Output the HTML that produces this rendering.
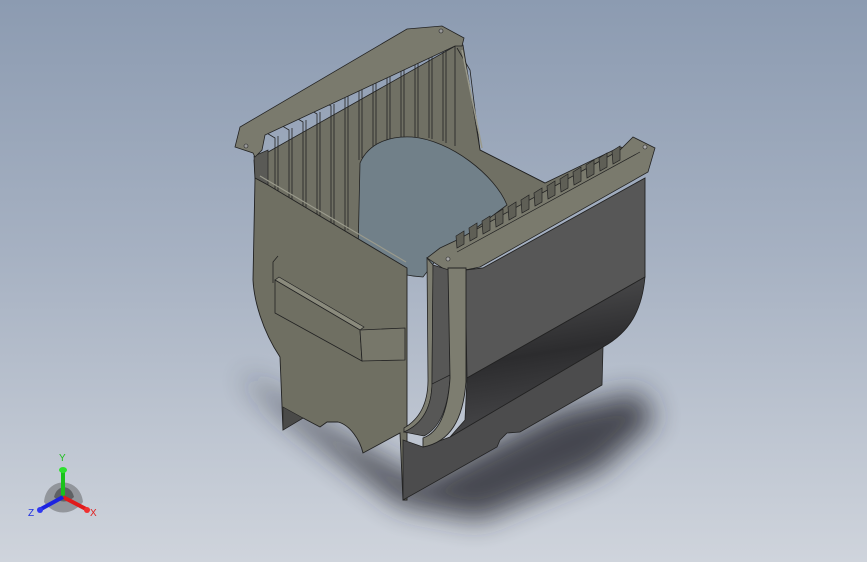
<!DOCTYPE html>
<html><head><style>
html,body{margin:0;padding:0;width:867px;height:562px;overflow:hidden}
body{background:linear-gradient(180deg,#8c9bb1 0%,#a6b1c2 45%,#cfd4dc 100%)}
svg{position:absolute;left:0;top:0}
</style></head><body>
<svg width="867" height="562" viewBox="0 0 867 562">
<defs>
<filter id="bl" x="-30%" y="-30%" width="160%" height="160%"><feGaussianBlur stdDeviation="14"/></filter>
<linearGradient id="cyl" x1="0" y1="0" x2="0.2" y2="1">
<stop offset="0" stop-color="#555556"/><stop offset="0.55" stop-color="#2c2c2e"/><stop offset="1" stop-color="#48484a"/></linearGradient>
</defs>
<!-- shadow -->
<path d="M240 375 L290 420 L400 505 L480 520 L600 470 L655 420 L640 392 L560 410 L420 480 L330 430 L260 385 Z" fill="#25272e" opacity="0.8" filter="url(#bl)"/>
<!-- interior back fill -->
<polygon points="254,160 457,45 463,45 480,150 545,183 620,147 640,150 430,262 407,270 255,180" fill="#707064" stroke="#222" stroke-width="0.8"/>
<!-- dark corner under left flange end -->
<polygon points="254,156 268,150 268,185 255,178" fill="#5a5a56" stroke="#222" stroke-width="0.7"/>
<!-- right side interior edge -->
<polyline points="457,48 470,70 480,150 545,183" fill="none" stroke="#222" stroke-width="0.8"/>
<line x1="462" y1="50" x2="482" y2="148" stroke="#9a9a8c" stroke-width="1.5"/>
<!-- back fins -->
<g stroke="#222" stroke-width="0.8" fill="none">
<path d="M265 132 L275 138 L275 205 M278 136 L278 207"/>
<path d="M279 124 L289 130 L289 213 M292 128 L292 215"/>
<path d="M293 116 L303 122 L303 221 M306 120 L306 223"/>
<path d="M307 108 L317 114 L317 229 M320 112 L320 231"/>
<path d="M321 100 L331 106 L331 237 M334 104 L334 239"/>
<path d="M335 92 L345 98 L345 245 M348 96 L348 230"/>
<path d="M349 84 L359 90 L359 160 M362 88 L362 158"/>
<path d="M363 76 L373 82 L373 150 M376 80 L376 148"/>
<path d="M377 68 L387 74 L387 143 M390 72 L390 141"/>
<path d="M391 60 L401 66 L401 139 M404 64 L404 138"/>
<path d="M405 52 L415 58 L415 137 M418 56 L418 137"/>
<path d="M419 44 L429 50 L429 138 M432 48 L432 139"/>
<path d="M433 36 L443 42 L443 141 M446 40 L446 143"/>
<path d="M447 30 L455 34 L455 146"/>
</g>
<!-- blue-grey ellipse -->
<path d="M360 163 C370 140 395 136 412 137 C450 140 495 175 507 205 L440 255 L423 277 C395 275 365 265 358 253 Z" fill="#718089" stroke="#222" stroke-width="0.8"/>
<!-- top back flange -->
<polygon points="235,147 240,127 407,29 442,26 464,38 462,46 455,46 265,135 262,150 255,157 253,153" fill="#7a7a6d" stroke="#222" stroke-width="0.8"/>
<circle cx="246" cy="146" r="2" fill="#999" stroke="#222" stroke-width="0.6"/>
<circle cx="441" cy="31" r="2" fill="#999" stroke="#222" stroke-width="0.6"/>
<!-- right top flange -->
<polygon points="427,258 440,248 457,240 620,150 633,137 655,148 648,172 480,267 450,273" fill="#7a7a6d" stroke="#222" stroke-width="0.8"/>
<g stroke="#222" stroke-width="0.7" fill="#5f5f56">
<polygon points="456,236 464,231 464,244 457,248"/>
<polygon points="469,228 477,223 477,237 470,241"/>
<polygon points="482,221 490,216 490,230 483,234"/>
<polygon points="495,214 503,209 503,223 496,227"/>
<polygon points="508,207 516,202 516,216 509,220"/>
<polygon points="521,200 529,195 529,209 522,213"/>
<polygon points="534,193 542,188 542,202 535,206"/>
<polygon points="547,186 555,181 555,195 548,199"/>
<polygon points="560,179 568,174 568,188 561,192"/>
<polygon points="573,172 581,167 581,181 574,185"/>
<polygon points="586,165 594,160 594,174 587,178"/>
<polygon points="599,158 607,153 607,167 600,171"/>
<polygon points="612,151 620,146 620,160 613,164"/>
</g>
<line x1="457" y1="252" x2="640" y2="152" stroke="#222" stroke-width="0.7"/>
<circle cx="448" cy="259" r="2" fill="#aaa" stroke="#222" stroke-width="0.6"/>
<circle cx="645" cy="147" r="2" fill="#aaa" stroke="#222" stroke-width="0.6"/>
<!-- left wall -->
<path d="M255 178 L268 185 L407 268 L407 500 L403 500 L400 433 L363 453 C360 440 350 425 338 422 L327 422 L320 427 L303 418 L283 430 L280 357 C262 330 254 300 253 280 Z" fill="#6f6f62" stroke="#222" stroke-width="0.9"/>
<polygon points="283,407 303,418 283,430" fill="#4a4a48" stroke="#222" stroke-width="0.6"/>
<line x1="260" y1="176" x2="406" y2="262" stroke="#9a9a8c" stroke-width="1.2"/>
<!-- rib -->
<polyline points="273,283 273,262 278,256" fill="none" stroke="#222" stroke-width="0.8"/>
<polygon points="275,280 279,277 364,327 360,330" fill="#8a8a7c" stroke="#222" stroke-width="0.7"/>
<polygon points="275,280 360,330 362,361 275,313" fill="#6f6f62" stroke="#222" stroke-width="0.8"/>
<polygon points="360,330 405,328 405,360 362,361" fill="#77776a" stroke="#222" stroke-width="0.8"/>
<!-- right wall upper face -->
<path d="M465 270 L483 268 L645 178 L645 277 L467 378 Z" fill="#575757" stroke="#222" stroke-width="0.9"/>
<!-- lower box -->
<polygon points="403,440 423,447 450,437 603,347 602,385 520,432 507,433 500,440 497,447 403,500" fill="#4c4c4d" stroke="#222" stroke-width="0.8"/>
<!-- cylinder -->
<path d="M467 378 L645 277 C642 310 630 332 603 347 L450 437 L465 420 Z" fill="url(#cyl)" stroke="#222" stroke-width="0.8"/>
<!-- front strips -->
<path d="M427 258 L433 265 L432 382 C432 410 420 425 404 432 L404 428 C418 420 428 405 428 380 Z" fill="#7d7d70" stroke="#222" stroke-width="0.8"/>
<path d="M433 265 L449 270 L450 378 C448 408 440 428 424 436 L404 432 C420 425 432 410 432 382 Z" fill="#575756" stroke="#222" stroke-width="0.7"/>
<path d="M448 268 L466 268 L466 382 C463 420 450 442 423 447 L423 438 C440 432 448 410 450 378 Z" fill="#7d7d70" stroke="#222" stroke-width="0.9"/>
<line x1="432" y1="384" x2="450" y2="375" stroke="#222" stroke-width="0.7"/>
<!-- triad -->
<g>
<path d="M44 502 C46 476 80 476 83 502 C72 516 54 516 44 502 Z" fill="#444" opacity="0.4"/>
<path d="M54 497 C57 484 71 484 74 497 C68 503 60 503 54 497 Z" fill="#222" opacity="0.45"/>
<line x1="63" y1="497" x2="63" y2="472" stroke="#19c21a" stroke-width="4"/>
<ellipse cx="63" cy="470" rx="4" ry="3" fill="#2ee02f"/>
<line x1="63" y1="497" x2="86" y2="509" stroke="#e01b1b" stroke-width="4"/>
<circle cx="87" cy="510" r="3" fill="#f03030"/>
<line x1="63" y1="497" x2="41" y2="509" stroke="#1c22e0" stroke-width="4"/>
<circle cx="40" cy="510" r="3" fill="#3038f0"/>
<text x="59" y="461" font-family="Liberation Sans,sans-serif" font-size="10" fill="#1fbf1f">Y</text>
<text x="90" y="516" font-family="Liberation Sans,sans-serif" font-size="10" fill="#e02020">X</text>
<text x="28" y="516" font-family="Liberation Sans,sans-serif" font-size="10" fill="#2030e0">Z</text>
</g>
</svg>
</body></html>
